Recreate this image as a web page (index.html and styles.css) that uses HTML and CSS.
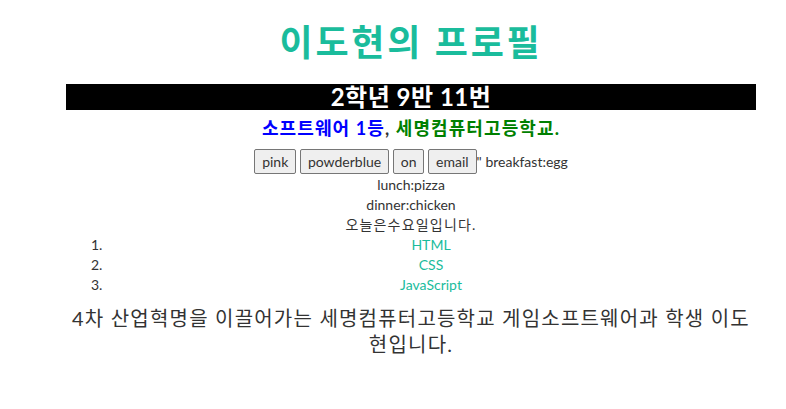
FILE: index.html
```html
<!DOCTYPE html>
<html lang="ko">
<head>
<meta charset="utf-8">
<title>이도현의 프로필</title>
<link rel="stylesheet" href="styles.css">
</head>
<body>
<div class="page">
  <h1 class="title">이도현의 프로필</h1>
  <h2 class="bar">2학년 9반 11번</h2>
  <p class="school"><span class="blue">소프트웨어 1등</span>, <span class="green">세명컴퓨터고등학교.</span></p>
  <div class="info">
    <div class="row"><button class="btn">pink</button> <button class="btn">powderblue</button> <button class="btn">on</button> <button class="btn">email</button>" breakfast:egg</div>
    <div class="line">lunch:pizza</div>
    <div class="line">dinner:chicken</div>
    <div class="line ko">오늘은수요일입니다.</div>
  </div>
  <ol class="list">
    <li>HTML</li>
    <li>CSS</li>
    <li>JavaScript</li>
  </ol>
  <p class="intro">4차 산업혁명을 이끌어가는 세명컴퓨터고등학교 게임소프트웨어과 학생 이도현입니다.</p>
</div>
</body>
</html>
```
FILE: styles.css
```css
body {
  margin: 0;
  font-family: Lato, "Noto Sans CJK KR", sans-serif;
  color: #333;
  background: #fff;
}
.page {
  margin: 0 30px 0 66px;
  width: 690px;
  text-align: center;
}
.title {
  margin: 20px 0 0;
  font-size: 36px;
  line-height: 44px;
  font-weight: 700;
  letter-spacing: 2.8px;
  color: #1abc9c;
}
.bar {
  margin: 20px 0 0;
  height: 26px;
  line-height: 26px;
  font-size: 24px;
  font-weight: 700;
  letter-spacing: 0.5px;
  background: #000;
  color: #fff;
}
.school {
  margin: 6px 0 0;
  font-size: 18px;
  line-height: 24px;
  font-weight: 700;
  letter-spacing: 1.1px;
}
.blue { color: #0000ff; }
.green { color: #008000; }
.info {
  margin-top: 9px;
  font-size: 14px;
  line-height: 20px;
}
.row {
  height: 26px;
  line-height: 25px;
}
.btn {
  font-family: Lato, sans-serif;
  font-size: 14px;
  height: 25px;
  padding: 0 7px;
  margin: 0;
  border: 1px solid #767676;
  border-radius: 2px;
  background: #efefef;
  color: #333;
  vertical-align: top;
}
.line {
  height: 20px;
}
.ko {
  letter-spacing: 1.2px;
}
.list {
  margin: 0;
  padding-left: 40px;
  font-size: 14px;
  line-height: 20px;
  color: #1abc9c;
}
.list li::marker {
  color: #333;
}
.intro {
  margin: 10px 0 0;
  padding: 0;
  font-size: 20px;
  line-height: 26px;
  letter-spacing: 1.2px;
}
```
